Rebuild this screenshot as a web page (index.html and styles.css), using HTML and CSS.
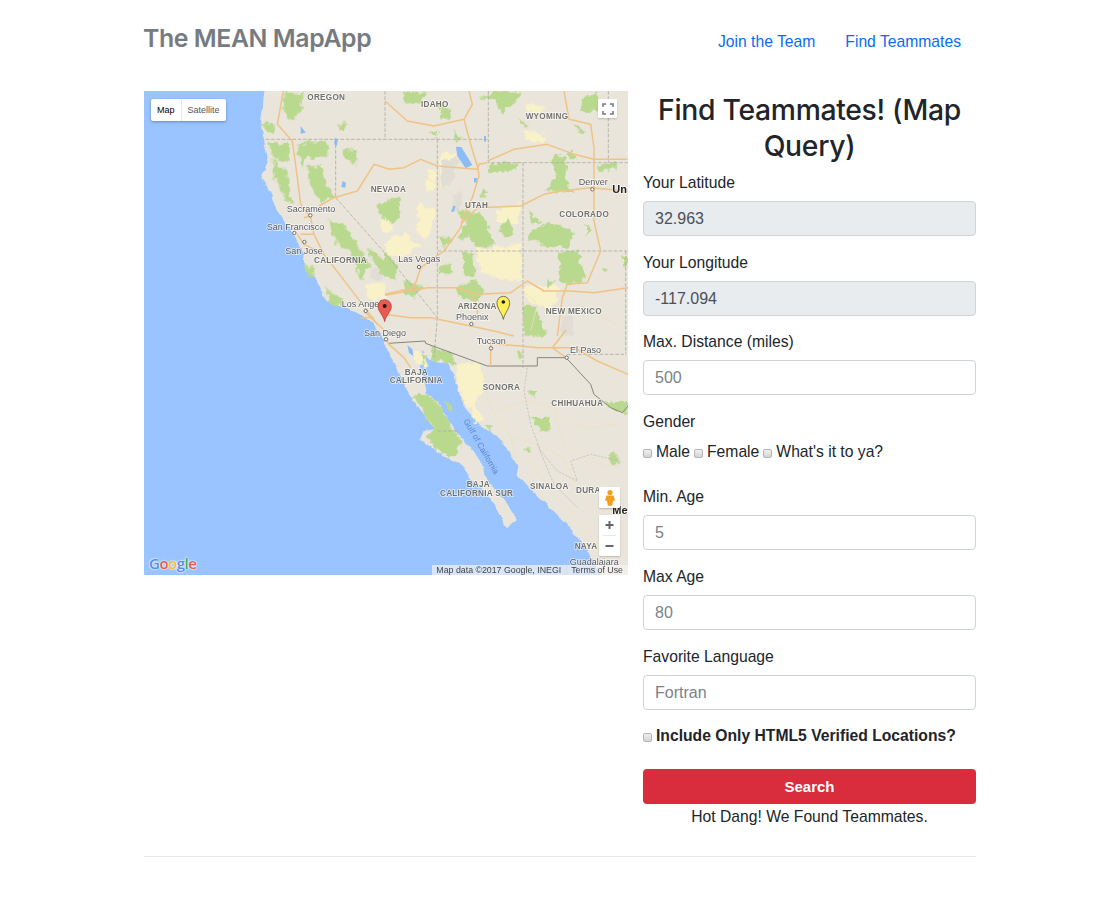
FILE: index.html
```html
<!DOCTYPE html>
<html lang="en">
<head>
<meta charset="utf-8">
<title>The MEAN MapApp</title>
<link rel="stylesheet" href="styles.css">
</head>
<body>
<div class="container">
  <header class="header">
    <h3 class="brand">The MEAN MapApp</h3>
    <nav class="nav">
      <a class="nav-link" href="#">Join the Team</a>
      <a class="nav-link" href="#">Find Teammates</a>
    </nav>
  </header>
  <main class="content">
    <div class="map">
      <svg class="map-svg" viewBox="0 0 1452 1452" width="484" height="484" xmlns="http://www.w3.org/2000/svg">
        <defs>
          <filter id="coast" x="-2%" y="-2%" width="104%" height="104%" filterUnits="objectBoundingBox">
            <feTurbulence type="fractalNoise" baseFrequency="0.035" numOctaves="3" seed="4" result="n"/>
            <feDisplacementMap in="SourceGraphic" in2="n" scale="14" xChannelSelector="R" yChannelSelector="G"/>
            <feGaussianBlur stdDeviation="1.4"/>
          </filter>
          <filter id="patch" x="-2%" y="-2%" width="104%" height="104%">
            <feTurbulence type="fractalNoise" baseFrequency="0.05" numOctaves="3" seed="9" result="n"/>
            <feDisplacementMap in="SourceGraphic" in2="n" scale="26" xChannelSelector="R" yChannelSelector="G"/>
            <feGaussianBlur stdDeviation="1.6"/>
          </filter>
          <filter id="soft" x="-2%" y="-2%" width="104%" height="104%"><feGaussianBlur stdDeviation="1"/></filter>
        </defs>
        <rect class="ocean" width="1452" height="1452"/>
        <path class="land" filter="url(#coast)" d="M365 -20L348 90L365 170L372 210L352 255L382 310L385 330L415 385L448 430L475 480L482 525L520 570L548 632L600 650L650 670L690 700L720 745L728 777L758 827L793 907L823 947L873 1017L838 1024L828 1045L898 1095L948 1117L985 1167L1043 1227L1088 1312L1118 1287L1083 1227L1023 1157L1003 1097L963 1057L933 1017L883 937L848 907L828 837L833 777L853 807L913 817L938 877L963 947L1013 1007L1063 1037L1123 1127L1118 1147L1163 1197L1223 1257L1283 1317L1323 1367L1348 1417L1388 1470L1470 1470L1470 -20Z"/>
        <g filter="url(#patch)">
          <g class="desert">
            <path d="M665 580L720 575L725 625L670 630Z"/>
            <path d="M700 380L735 385L750 420L715 425Z"/>
            <g transform="translate(723 -3)">
              <path d="M270 480L410 460L410 570L360 570L290 550Z"/>
              <path d="M165 190L215 190L185 270L165 300Z"/>
              <path d="M420 40L480 50L470 70L420 60Z"/>
              <path d="M415 120L480 130L470 160L425 150Z"/>
              <path d="M330 360L410 340L400 400L340 400Z"/>
              <path d="M410 590L530 590L500 660L440 640L420 620Z"/>
              <path d="M0 450L60 430L110 470L50 500L0 490Z"/>
              <path d="M100 340L150 360L130 450L95 430Z"/>
              <path d="M130 240L155 240L150 300L125 300Z"/>
            </g>
            <g transform="translate(723 717)">
              <path d="M215 100L290 100L300 170L250 240L215 160Z"/>
              <path d="M255 210L300 270L270 280Z"/>
              <path d="M85 60L120 70L130 110L95 100Z"/>
            </g>
          </g>
          <g class="pale">
            <g transform="translate(723 -3)">
              <path d="M172 208L222 208L195 290L168 290Z"/>
              <path d="M205 310L232 305L225 362L205 360Z"/>
              <path d="M530 675L565 675L565 735L530 735Z"/>
            </g>
            <path d="M680 530L715 530L710 570L680 565Z"/>
          </g>
          <g class="green">
            <path d="M420 5L480 5L470 60L440 90L420 60Z"/>
            <path d="M350 95L395 100L385 130Z"/>
            <path d="M370 150L440 160L430 210L390 200Z"/>
            <path d="M385 200L425 240L445 340L420 320L395 260Z"/>
            <path d="M460 160L550 150L550 195L490 200L470 230Z"/>
            <path d="M490 225L535 225L540 270L580 320L530 330L500 290Z"/>
            <path d="M550 385L600 400L650 480L680 520L650 570L620 480L580 460Z"/>
            <path d="M595 175L640 180L635 225L610 210Z"/>
            <path d="M580 100L610 95L600 125Z"/>
            <path d="M545 590L590 620L600 650L560 635Z"/>
            <path d="M480 520L510 530L500 560Z"/>
            <path d="M700 340L735 330L735 380L710 380Z"/>
            <path d="M670 470L735 520L735 560L690 520Z"/>
            <g transform="translate(723 -3)">
              <path d="M50 5L120 5L110 40L60 40Z"/>
              <path d="M160 40L200 60L195 95L170 80Z"/>
              <path d="M135 125L160 125L155 145Z"/>
              <path d="M205 120L235 150L210 155Z"/>
              <path d="M285 25L330 5L410 5L400 30L350 70L330 30Z"/>
              <path d="M400 85L430 105L415 110Z"/>
              <path d="M585 30L640 5L640 65L590 65Z"/>
              <path d="M640 225L695 215L695 240L640 240Z"/>
              <path d="M565 100L605 130L590 140Z"/>
              <path d="M305 225L400 215L395 240L310 250Z"/>
              <path d="M500 195L540 200L545 280L570 310L480 300L510 265Z"/>
              <path d="M545 180L565 185L575 215L550 205Z"/>
              <path d="M425 355L470 400L440 400Z"/>
              <path d="M430 430L490 395L570 425L550 470L490 470L430 450Z"/>
              <path d="M340 420L370 380L385 430L360 440Z"/>
              <path d="M215 360L290 370L330 460L280 475L250 440L215 450L240 400Z"/>
              <path d="M290 290L310 310L290 330Z"/>
              <path d="M160 440L200 445L180 475Z"/>
              <path d="M230 490L260 490L275 555L240 555Z"/>
              <path d="M160 530L200 520L200 555L165 555Z"/>
              <path d="M60 575L115 590L85 620L50 605Z"/>
              <path d="M0 480L40 530L25 570L0 560Z"/>
              <path d="M0 330L40 320L45 390L15 400L0 380Z"/>
              <path d="M210 595L270 570L300 600L280 630L230 630Z"/>
              <path d="M410 650L450 650L480 735L420 735Z"/>
              <path d="M520 490L580 480L600 560L560 590L525 570Z"/>
              <path d="M490 570L510 575L480 600Z"/>
              <path d="M600 400L620 420L605 440Z"/>
              <path d="M710 500L729 500L729 530L715 530Z"/>
              <path d="M650 530L670 535L655 545Z"/>
            </g>
            <g transform="translate(723 717)">
              <path d="M140 50L200 70L215 105L180 100L140 90Z"/>
              <path d="M108 70L125 75L115 110Z"/>
              <path d="M82 195L125 190L160 225L205 300L232 340L205 380L175 375L120 322L150 300Z"/>
              <path d="M182 215L200 225L205 245L190 240Z"/>
              <path d="M435 260L495 265L490 315L450 285Z"/>
              <path d="M665 220L725 210L725 250L690 245Z"/>
              <path d="M670 370L700 370L695 405L675 400Z"/>
              <path d="M432 180L452 185L445 210Z"/>
              <path d="M398 60L412 65L405 95Z"/>
              <path d="M440 0L485 0L480 20L450 20Z"/>
              <path d="M295 285L320 290L315 305Z"/>
              <path d="M415 355L440 355L430 370Z"/>
            </g>
          </g>
        </g>
        <g class="lake" filter="url(#soft)">
          <path d="M936 167L952 168L985 222L965 232L940 195Z"/>
          <path d="M928 345L935 345L930 362L921 362Z"/>
          <path d="M990 260L1000 262L998 276L990 274Z"/>
          <path d="M790 762L805 775L808 795L795 785Z"/>
          <path d="M572 140L582 145L578 165L571 160Z"/>
          <path d="M470 105L485 125L470 128Z"/>
          <path d="M596 270L606 275L604 290L592 288Z"/>
          <path d="M1020 135L1026 135L1026 152L1020 152Z"/>
        </g>
        <g filter="url(#soft)">
          <g class="thin">
            <path d="M1020 880L1040 950L1100 1040L1120 1120M1060 960L1150 930L1230 950L1290 1000L1340 1010L1420 1000"/>
            <path d="M1100 1040L1180 1060L1260 1100L1300 1200M1230 950L1260 1060L1340 1110L1420 1130M1150 1100L1230 1210L1320 1300L1380 1400"/>
            <path d="M800 650L860 720L850 760M1100 560L1180 640L1160 720M1300 640L1420 700M1060 840L1120 800M830 250L910 300"/>
          </g>
          <g class="mx-border">
            <path d="M1150 830L1140 900L1160 1000L1190 1080L1240 1140L1300 1170L1280 1110L1340 1090L1430 1110M1180 1060L1230 1180L1300 1250"/>
          </g>
          <g class="borders">
            <path d="M365 145L1030 145"/>
            <path d="M575 145L575 320L735 500L880 680L880 480"/>
            <path d="M880 145L880 480L1450 480"/>
            <path d="M723 0L723 145M1033 0L1033 215L1452 215"/>
            <path d="M1137 215L1137 830"/>
            <path d="M880 680L870 800"/>
            <path d="M1393 0L1393 215"/>
            <path d="M1445 480L1445 790"/>
            <path d="M880 1020L945 1020"/>
            <path d="M1270 790L1440 790"/>
          </g>
          <path class="intl" d="M733 757L843 750L845 757L1030 825L1180 825L1180 800L1266 800L1340 880L1350 910L1400 950L1435 965L1452 945"/>
          <g class="roads">
            <path d="M418 0L400 100L445 150L460 260L470 340L500 380L510 430L540 490L640 620L700 700"/>
            <path d="M470 430L510 430M480 380L500 375M460 430L480 460L540 490"/>
            <path d="M525 345L570 320L640 300L690 220L735 235L780 230L830 205L880 225L960 232L1000 235L1005 220L1030 215"/>
            <path d="M723 30L790 90L870 105L960 85L985 40L975 0"/>
            <path d="M960 85L980 160L1000 225L1005 255L985 320L960 370L950 410L900 480L830 530L810 590L723 610"/>
            <path d="M1030 210L1110 175L1210 160L1290 190L1350 205L1450 205"/>
            <path d="M1260 0L1275 85L1340 100L1350 170L1350 300L1350 390L1370 480L1330 575L1270 580L1255 620L1240 735"/>
            <path d="M950 400L1000 350L1130 345L1200 310L1250 300L1340 290L1450 300"/>
            <path d="M723 613L850 590L940 590L1000 610L1100 605L1150 570L1200 600L1280 600L1350 605L1452 590"/>
            <path d="M723 670L800 680L860 680L980 705L1050 720L1110 735"/>
            <path d="M980 610L1000 640L1000 690"/>
            <path d="M1040 760L1040 825M1060 760L1130 765L1180 770L1290 770L1360 810L1452 850"/>
            <path d="M1266 717L1225 770L1266 800"/>
            <path d="M723 740L735 760L780 800L800 830"/>
            <path d="M660 660L723 720"/>
            <path d="M650 680L690 680"/>
          </g>
          <text class="st" x="490" y="27">OREGON</text>
          <text class="st" x="831" y="49">IDAHO</text>
          <text class="st" x="1145" y="84">WYOMING</text>
          <text class="st" x="680" y="302">NEVADA</text>
          <text class="st" x="963" y="351">UTAH</text>
          <text class="st" x="1246" y="377">COLORADO</text>
          <text class="st" x="510" y="516">CALIFORNIA</text>
          <text class="st" x="941" y="654">ARIZONA</text>
          <text class="st" x="1205" y="668">NEW MEXICO</text>
          <text class="st" x="782" y="852">BAJA</text>
          <text class="st" x="737" y="877">CALIFORNIA</text>
          <text class="st" x="1016" y="897">SONORA</text>
          <text class="st" x="1222" y="945">CHIHUAHUA</text>
          <text class="st" x="968" y="1189">BAJA</text>
          <text class="st" x="888" y="1214">CALIFORNIA SUR</text>
          <text class="st" x="1158" y="1194">SINALOA</text>
          <text class="st" x="1296" y="1205">DURA</text>
          <text class="st" x="1292" y="1374">NAYA</text>
          <text class="gulf" transform="translate(958 990) rotate(60)">Gulf of California</text>
          <text class="city" x="428" y="362">Sacramento</text>
          <text class="city" x="368" y="416">San Francisco</text>
          <text class="city" x="424" y="488">San Jose</text>
          <text class="city" x="593" y="649">Los Angeles</text>
          <text class="city" x="660" y="734">San Diego</text>
          <text class="city" x="763" y="514">Las Vegas</text>
          <text class="city" x="936" y="688">Phoenix</text>
          <text class="city" x="998" y="760">Tucson</text>
          <text class="city" x="1278" y="786">El Paso</text>
          <text class="city" x="1304" y="282">Denver</text>
          <text class="city" x="1277" y="1421">Guadalajara</text>
          <text class="big" x="1405" y="306">Un</text>
          <text class="big" x="1405" y="1270">Me</text>
          <circle class="dot" cx="499" cy="373" r="5"/>
          <circle class="dot" cx="451" cy="426" r="5"/>
          <circle class="dot" cx="481" cy="453" r="5"/>
          <circle class="dot" cx="665" cy="660" r="5"/>
          <circle class="dot" cx="825" cy="528" r="5"/>
          <circle class="dot" cx="982" cy="699" r="5"/>
          <circle class="dot" cx="1041" cy="772" r="5"/>
          <circle class="dot" cx="1268" cy="800" r="5"/>
          <circle class="dot" cx="1345" cy="295" r="5"/>
          <circle class="dot" cx="726" cy="745" r="5"/>
        </g>
        <path class="pin-red" d="M722 692C718 672 702 662 702 646A20 20 0 0 1 742 646C742 662 726 672 722 692Z"/>
        <circle class="pin-dot" cx="722" cy="645" r="6"/>
        <path class="pin-yellow" d="M1078 685C1074 665 1059 654 1059 635A19 19 0 0 1 1097 635C1097 654 1082 665 1078 685Z"/>
        <circle class="pin-dot" cx="1078" cy="633" r="5.5"/>
      </svg>
      <div class="map-type">
        <span class="map-type-item map-type-on">Map</span>
        <span class="map-type-item">Satellite</span>
      </div>
      <button class="ctrl ctrl-full" type="button" aria-label="Full screen">
        <svg width="12" height="12" viewBox="0 0 12 12"><path class="full-icon" d="M1 4V1H4M8 1H11V4M11 8V11H8M4 11H1V8"/></svg>
      </button>
      <div class="ctrl ctrl-peg">
        <svg width="10" height="16" viewBox="0 0 10 16"><circle class="peg" cx="5" cy="2.6" r="2.6"/><path class="peg" d="M1.4 5.4H8.6L10 10.8H8L7.2 15.8H2.8L2 10.8H0Z"/></svg>
      </div>
      <div class="ctrl ctrl-zoom">
        <svg class="zoom-svg" width="21" height="41" viewBox="0 0 21 41"><path class="zoom-line" d="M6.5 10H14.5M10.5 6V14M6.5 31H14.5"/><path class="zoom-sep" d="M4 20.5H17"/></svg>
      </div>
      <div class="google"><span class="gb">G</span><span class="gr">o</span><span class="gy">o</span><span class="gb">g</span><span class="gg">l</span><span class="gr">e</span></div>
      <div class="attrib"><span class="attrib-item">Map data ©2017 Google, INEGI</span><span class="attrib-item">Terms of Use</span></div>
    </div>
    <form class="form">
      <h2 class="title">Find Teammates! (Map Query)</h2>
      <div class="group">
        <label class="label">Your Latitude</label>
        <input class="input" type="text" value="32.963" disabled>
      </div>
      <div class="group group-tight">
        <label class="label">Your Longitude</label>
        <input class="input" type="text" value="-117.094" disabled>
      </div>
      <div class="group">
        <label class="label">Max. Distance (miles)</label>
        <input class="input" type="text" placeholder="500">
      </div>
      <div class="group group-gender">
        <label class="label label-gender">Gender</label>
        <div class="checks">
          <label class="check"><input class="box" type="checkbox"> Male</label>
          <label class="check"><input class="box" type="checkbox"> Female</label>
          <label class="check"><input class="box" type="checkbox"> What's it to ya?</label>
        </div>
      </div>
      <div class="group">
        <label class="label">Min. Age</label>
        <input class="input" type="text" placeholder="5">
      </div>
      <div class="group">
        <label class="label">Max Age</label>
        <input class="input" type="text" placeholder="80">
      </div>
      <div class="group group-tight">
        <label class="label">Favorite Language</label>
        <input class="input" type="text" placeholder="Fortran">
      </div>
      <label class="check check-strong"><input class="box" type="checkbox"> Include Only HTML5 Verified Locations?</label>
      <button class="search" type="button">Search</button>
      <p class="result">Hot Dang! We Found Teammates.</p>
    </form>
  </main>
  <hr class="rule">
</div>
</body>
</html>
```
FILE: styles.css
```css
* { box-sizing: border-box; }
html, body { margin: 0; padding: 0; }
body {
  background: #fff;
  color: #212529;
  font-family: "Liberation Sans", Arial, sans-serif;
  font-size: 15.7px;
  line-height: 21px;
}
.container { width: 832px; margin-left: 144px; }
.header {
  display: flex;
  justify-content: space-between;
  align-items: flex-start;
  height: 91px;
}
.brand {
  margin: 21px 0 0 -1px;
  font-family: Inter, "Liberation Sans", sans-serif;
  font-size: 24.8px;
  font-weight: 600;
  line-height: 34px;
  color: #767b81;
  letter-spacing: -0.4px;
}
.nav { display: flex; gap: 30px; padding: 31px 15px 0 0; }
.nav-link { color: #0a6cf5; text-decoration: none; }
.content { display: flex; gap: 15px; align-items: flex-start; }
.map { position: relative; width: 484px; height: 484px; flex: none; overflow: hidden; }
.map-svg { display: block; }
.ocean { fill: #99c4ff; }
.land { fill: #e9e5da; }
.desert path { fill: #f9f1c8; }
.pale path { fill: #e0ddd4; }
.green path { fill: #b9d98f; }
.lake path { fill: #8cbcf5; }
.thin { fill: none; stroke: #f1dfbd; stroke-width: 2; }
.mx-border { fill: none; stroke: #bcb8ae; stroke-width: 2; stroke-dasharray: 7 4; }
.borders { fill: none; stroke: #b0aca4; stroke-width: 2.5; stroke-dasharray: 11 5; }
.intl { fill: none; stroke: #85857d; stroke-width: 3; }
.roads { fill: none; stroke: #efc387; stroke-width: 4.5; stroke-linejoin: round; }
.st, .city, .gulf, .big {
  font-family: "Liberation Sans", Arial, sans-serif;
  paint-order: stroke;
  stroke: rgba(255, 255, 255, 0.75);
  stroke-width: 4px;
}
.st { font-size: 24.5px; font-weight: 700; letter-spacing: 0.8px; fill: #70706c; }
.city { font-size: 27px; fill: #55555a; }
.gulf { font-size: 25px; fill: #5d86c4; stroke: none; }
.big { font-size: 33px; font-weight: 700; fill: #222; }
.dot { fill: #fff; stroke: #555; stroke-width: 2.5; }
.pin-red { fill: #ea5a50; stroke: #a53a30; stroke-width: 2; }
.pin-yellow { fill: #fbef5a; stroke: #44421c; stroke-width: 2; }
.pin-dot { fill: #221a10; }
.map-type {
  position: absolute;
  left: 7px;
  top: 8px;
  display: flex;
  height: 22px;
  background: #fff;
  border-radius: 2px;
  box-shadow: 0 1px 3px rgba(0, 0, 0, .3);
}
.map-type-item {
  padding: 0 6px;
  font-size: 9px;
  line-height: 22px;
  color: #565656;
}
.map-type-on { color: #000; border-right: 1px solid #e6e6e6; }
.ctrl {
  position: absolute;
  display: flex;
  align-items: center;
  justify-content: center;
  padding: 0;
  border: 0;
  background: #fff;
  border-radius: 1px;
  box-shadow: 0 1px 2px rgba(0, 0, 0, .2);
}
.ctrl-full { left: 454px; top: 8px; width: 19px; height: 19px; }
.ctrl-peg { left: 455px; top: 396px; width: 21px; height: 21px; }
.ctrl-zoom { left: 455px; top: 424px; width: 21px; height: 41px; }
.full-icon { fill: none; stroke: #777; stroke-width: 1.5; }
.peg { fill: #f0a020; }
.zoom-line { fill: none; stroke: #666; stroke-width: 2; }
.zoom-sep { stroke: #e6e6e6; stroke-width: 1; }
.google {
  position: absolute;
  left: 5px;
  top: 462px;
  font-family: "Open Sans", "Liberation Sans", sans-serif;
  font-size: 15px;
  font-weight: 600;
  line-height: 20px;
  letter-spacing: -0.5px;
  text-shadow: 0 0 2px #fff, 0 0 2px #fff;
}
.gb { color: #5a8ae8; }
.gr { color: #e8594e; }
.gy { color: #f4bb2c; }
.gg { color: #47a95b; }
.attrib {
  position: absolute;
  right: 0;
  bottom: 0;
  display: flex;
  height: 10px;
  background: rgba(245, 245, 245, .7);
  font-size: 8.8px;
  line-height: 10px;
  color: #444;
}
.attrib-item { padding: 0 5px 0 4px; white-space: nowrap; }
.attrib-item + .attrib-item { border-left: 1px solid #ddd; }
.form { width: 333px; flex: none; }
.title {
  margin: 1px 0 8px;
  font-family: Inter, "Liberation Sans", sans-serif;
  font-size: 28.3px;
  font-weight: 500;
  line-height: 36px;
  text-align: center;
  letter-spacing: -0.3px;
  color: #212529;
}
.group { margin-bottom: 16px; }
.group-tight { margin-bottom: 15px; }
.group-gender { margin-bottom: 24px; }
.label { display: block; margin-bottom: 8px; }
.label-gender { margin-bottom: 9px; }
.input {
  display: block;
  width: 100%;
  height: 35px;
  padding: 0 11px;
  border: 1px solid #ced4da;
  border-radius: 4px;
  background: #fff;
  color: #495057;
  font: inherit;
  font-size: 16px;
}
.input::placeholder { color: #7a828a; opacity: 1; }
.input:disabled { background: #e9ecef; color: #495057; }
.checks { display: flex; gap: 4px; }
.check { display: flex; align-items: center; gap: 4px; }
.check-strong { font-weight: 700; margin-bottom: 23px; }
.box {
  appearance: none;
  width: 9px;
  height: 9px;
  margin: 3px 0 0;
  border: 1px solid #b4b4b4;
  border-radius: 2px;
  background: linear-gradient(#f0f0f0, #d4d4d4);
}
.search {
  display: block;
  width: 100%;
  height: 35px;
  padding: 0;
  border: 0;
  border-radius: 4px;
  background: #d92d3e;
  color: #fff;
  font: inherit;
  font-size: 15px;
  font-weight: 700;
}
.result { margin: 2px 0 0; text-align: center; }
.rule { margin: 29px 0 0; border: 0; border-top: 1px solid #e9e9e9; }
```
